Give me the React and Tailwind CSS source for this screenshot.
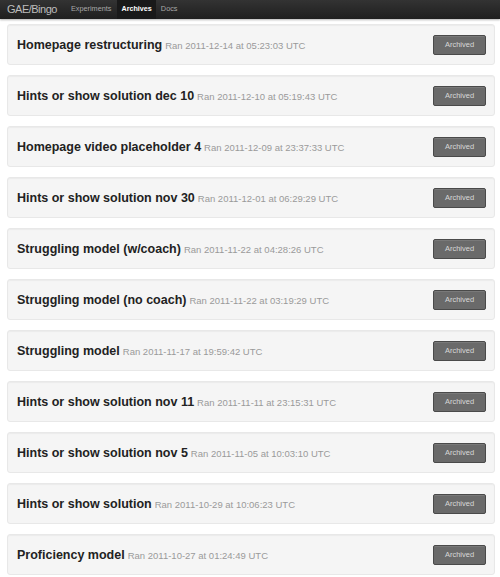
import React from "react";

const items = [
  ["Homepage restructuring", "Ran 2011-12-14 at 05:23:03 UTC"],
  ["Hints or show solution dec 10", "Ran 2011-12-10 at 05:19:43 UTC"],
  ["Homepage video placeholder 4", "Ran 2011-12-09 at 23:37:33 UTC"],
  ["Hints or show solution nov 30", "Ran 2011-12-01 at 06:29:29 UTC"],
  ["Struggling model (w/coach)", "Ran 2011-11-22 at 04:28:26 UTC"],
  ["Struggling model (no coach)", "Ran 2011-11-22 at 03:19:29 UTC"],
  ["Struggling model", "Ran 2011-11-17 at 19:59:42 UTC"],
  ["Hints or show solution nov 11", "Ran 2011-11-11 at 23:15:31 UTC"],
  ["Hints or show solution nov 5", "Ran 2011-11-05 at 10:03:10 UTC"],
  ["Hints or show solution", "Ran 2011-10-29 at 10:06:23 UTC"],
  ["Proficiency model", "Ran 2011-10-27 at 01:24:49 UTC"],
];

export default function App() {
  return (
    <div className="w-[500px] h-[577px] overflow-hidden bg-white" style={{ fontFamily: '"Liberation Sans", Arial, sans-serif' }}>
      <div className="h-[19px] bg-gradient-to-b from-[#333333] to-[#1f1f1f] flex items-stretch pl-[7px] shadow-[0_1px_2px_rgba(0,0,0,0.3)]">
        <div className="flex items-center text-[11px] text-[#bdbdbd] tracking-[-0.5px] mr-[10px]">GAE/Bingo</div>
        <div className="flex items-center px-[4px] text-[7.3px] text-[#a8a8a8]">Experiments</div>
        <div className="flex items-center px-[4px] ml-[2px] text-[7.2px] font-bold text-white bg-[#191919]">Archives</div>
        <div className="flex items-center px-[5px] text-[7.3px] text-[#a8a8a8]">Docs</div>
      </div>
      <div className="flex flex-col gap-[10px] pt-[5px] pl-[7px] pr-[5px]">
        {items.map(([t, d], i) => (
          <div key={i} className="h-[41px] flex items-center justify-between bg-[#f5f5f5] border border-[#e8e8e8] rounded-[3px] pl-[9px] pr-[8px] shadow-[inset_0_1px_1px_rgba(0,0,0,0.04)]">
            <div className="flex items-baseline pt-[2px]">
              <span className="text-[12.5px] font-bold text-[#222]">{t}</span>
              <span className="ml-[3px] text-[9.5px] text-[#9a9a9a]">{d}</span>
            </div>
            <div className="w-[53px] h-[20px] flex items-center justify-center bg-[#6a6a6a] border border-[#4a4a4a] rounded-[2px] text-[7.5px] text-[#d8d8d8] shadow-[inset_0_1px_0_rgba(255,255,255,0.1)]">
              Archived
            </div>
          </div>
        ))}
      </div>
    </div>
  );
}
